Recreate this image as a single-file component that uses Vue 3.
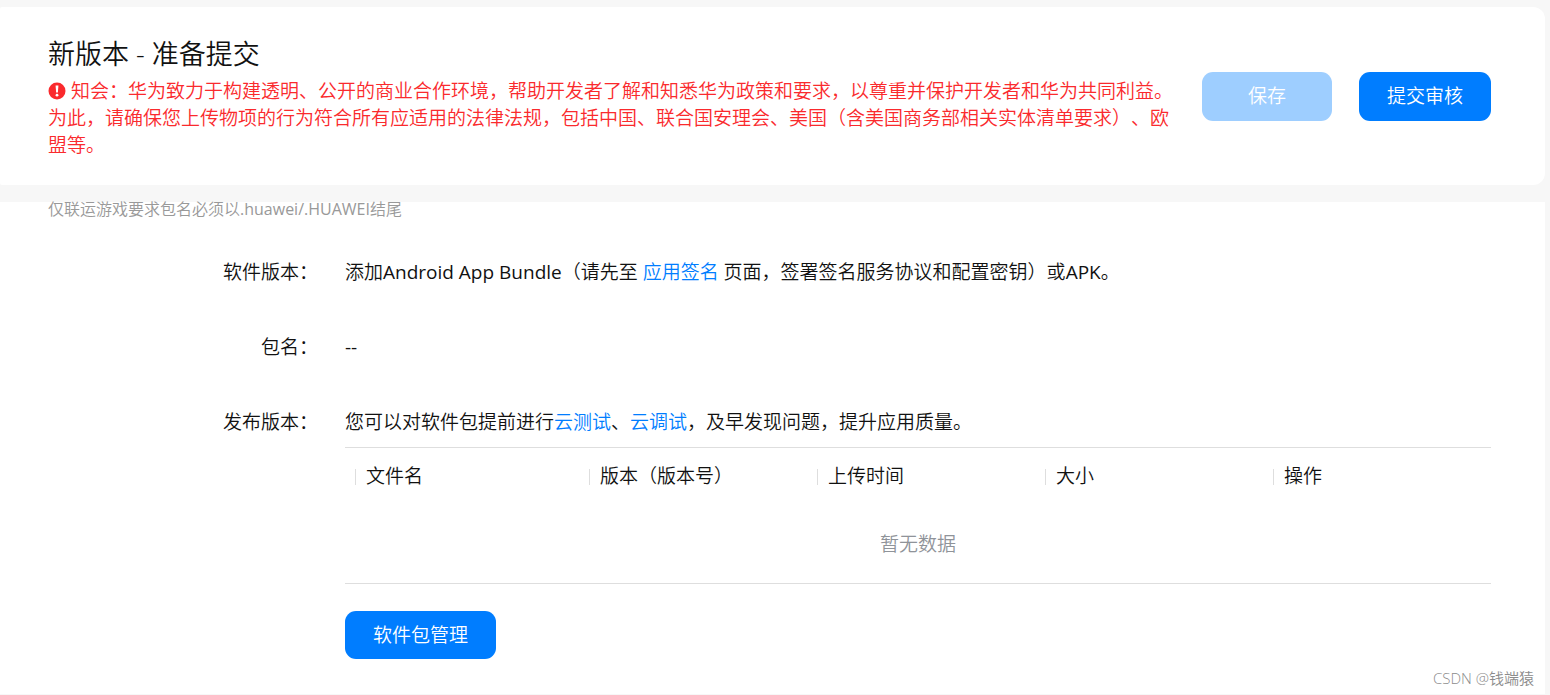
<script setup>
const columns = ['文件名', '版本（版本号）', '上传时间', '大小', '操作']
</script>

<template>
  <div class="page">
    <header class="card head">
      <div class="intro">
        <h1>新版本 - 准备提交</h1>
        <p class="notice">
          <svg class="alert" viewBox="0 0 18 18" aria-hidden="true">
            <circle cx="9" cy="9" r="8.5" fill="#fa2a2d" />
            <path d="M7.6 3.6h2.8l-.5 7H8.1z" fill="#fff" />
            <circle cx="9" cy="13.2" r="1.4" fill="#fff" />
          </svg>知会：华为致力于构建透明、公开的商业合作环境，帮助开发者了解和知悉华为政策和要求，以尊重并保护开发者和华为共同利益。为此，请确保您上传物项的行为符合所有应适用的法律法规，包括中国、联合国安理会、美国（含美国商务部相关实体清单要求）、欧盟等。
        </p>
      </div>
      <div class="actions">
        <button type="button" class="btn save" disabled>保存</button>
        <button type="button" class="btn">提交审核</button>
      </div>
    </header>

    <main class="card body">
      <p class="hint">仅联运游戏要求包名必须以<span class="latin">.huawei/.HUAWEI</span>结尾</p>
      <dl class="form">
        <dt>软件版本：</dt>
        <dd>添加<span class="latin">Android App Bundle</span>（请先至 <a href="#sign">应用签名</a> 页面，签署签名服务协议和配置密钥）或<span class="latin">APK</span>。</dd>
        <dt>包名：</dt>
        <dd class="latin">--</dd>
        <dt>发布版本：</dt>
        <dd>
          您可以对软件包提前进行<a href="#test">云测试</a>、<a href="#debug">云调试</a>，及早发现问题，提升应用质量。
          <table>
            <colgroup>
              <col class="name">
            </colgroup>
            <thead>
              <tr>
                <th v-for="c in columns" :key="c" scope="col"><span>{{ c }}</span></th>
              </tr>
            </thead>
            <tbody>
              <tr>
                <td :colspan="columns.length">暂无数据</td>
              </tr>
            </tbody>
          </table>
          <button type="button" class="btn">软件包管理</button>
        </dd>
      </dl>
    </main>
    <span class="mark">CSDN @钱端猿</span>
  </div>
</template>

<style>
body {
  margin: 0;
  background: #f7f7f7;
}
</style>

<style scoped>
.page {
  position: relative;
  box-sizing: border-box;
  min-height: 100vh;
  padding: 7px 5px 1px 0;
  display: flex;
  flex-direction: column;
  gap: 17px;
  background: #f7f7f7;
  color: #111;
  font-family: "Open Sans", "Noto Sans CJK SC", sans-serif;
  font-size: 19px;
  font-weight: 350;
  line-height: 27px;
  text-spacing-trim: space-all;
}
.latin {
  font-weight: 400;
}
.card {
  background: #fff;
  padding: 0 54px 0 48px;
}
.head {
  display: flex;
  align-items: center;
  justify-content: space-between;
  gap: 24px;
  padding-top: 27px;
  padding-bottom: 26px;
  border-radius: 2px 12px 12px 2px;
}
.intro {
  flex: 1;
}
h1 {
  margin: 0 0 5px;
  font-size: 27px;
  font-weight: 350;
  line-height: 39px;
}
.notice {
  margin: 0;
  color: #fa2a2d;
}
.alert {
  width: 18px;
  height: 18px;
  margin-right: 5px;
  vertical-align: -2px;
}
.actions {
  display: flex;
  gap: 27px;
}
.btn {
  height: 48px;
  padding: 0 28px;
  border: 0;
  border-radius: 11px;
  background: #007dff;
  color: #fff;
  font: inherit;
  cursor: pointer;
}
.actions .btn {
  height: 49px;
}
.save {
  width: 130px;
  background: #9eceff;
  cursor: default;
}
.body {
  flex: 1;
  padding-bottom: 34px;
}
.hint {
  margin: 0;
  padding-bottom: 43px;
  color: #999;
  font-size: 16px;
  line-height: 14px;
}
.form {
  display: grid;
  grid-template-columns: 270px 1fr;
  gap: 48px 27px;
  margin: 0;
}
dt {
  text-align: right;
}
dd {
  margin: 0;
}
a {
  color: #007dff;
  text-decoration: none;
}
table {
  width: 100%;
  margin: 11px 0 27px;
  border-collapse: collapse;
  table-layout: fixed;
  border-top: 1px solid #dedede;
  border-bottom: 1px solid #dedede;
}
.name {
  width: 234px;
}
th {
  height: 57px;
  padding: 0 0 0 10px;
  font-weight: 350;
  text-align: left;
}
th span {
  display: flex;
  align-items: center;
}
th span::before {
  content: "";
  width: 1px;
  height: 16px;
  margin-right: 10px;
  background: #dedede;
}
td {
  height: 78px;
  padding: 0;
  color: #8f9399;
  text-align: center;
}
.mark {
  position: absolute;
  right: 16px;
  bottom: 7px;
  color: #8c8c8c;
  font-size: 15px;
  line-height: 20px;
}
</style>
